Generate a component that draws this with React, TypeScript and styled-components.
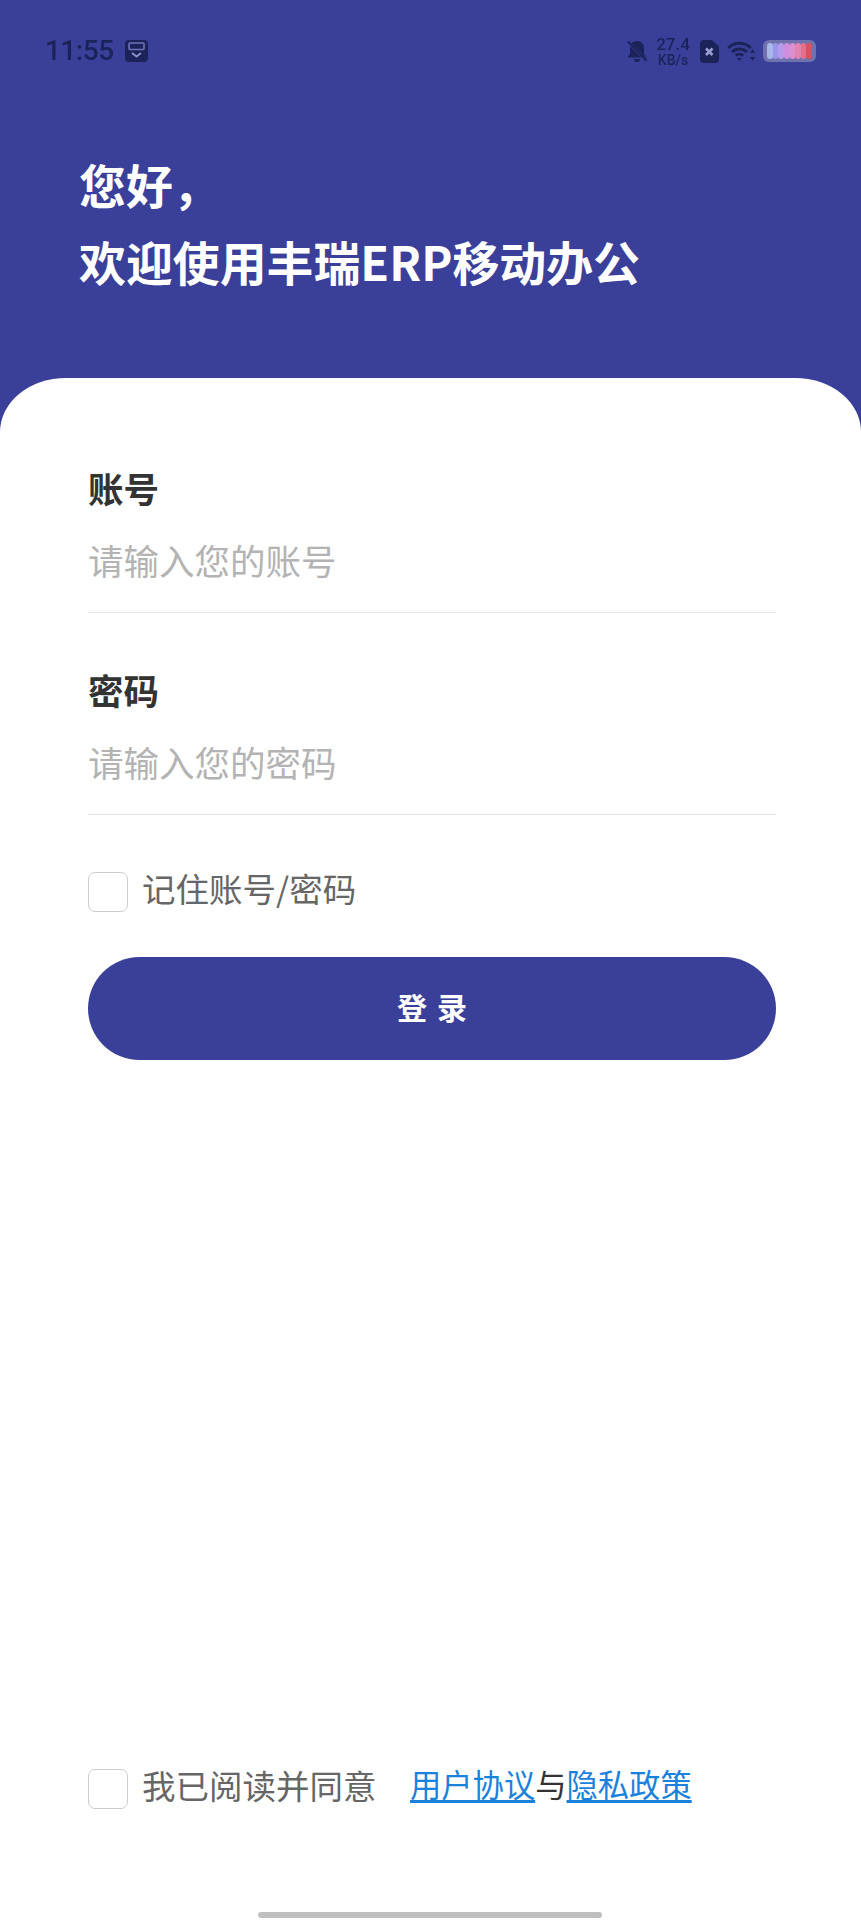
import React from "react";
import styled, { createGlobalStyle } from "styled-components";

const CJK = `"Noto Sans CJK SC", "Noto Sans", sans-serif`;
const INDIGO = "#3a4099";
const INK = "#1c2359";

const Global = createGlobalStyle`
  html, body { margin: 0; padding: 0; background: #fff; }
  * { box-sizing: border-box; }
`;
const Page = styled.div`
  width: 861px; height: 1920px; display: flex; flex-direction: column;
  background: ${INDIGO}; font-family: ${CJK}; overflow: hidden;
`;
const StatusBar = styled.div`
  height: 102px; padding: 0 45px; display: flex; align-items: center; justify-content: space-between; color: ${INK};
  filter: blur(0.4px);
`;
const StatusGroup = styled.div`display: flex; align-items: center;`;
const Clock = styled.span`
  font-family: "Roboto", sans-serif; font-size: 28px; font-weight: 500; letter-spacing: -0.5px; line-height: 32px; margin-right: 11px;
`;
const Speed = styled.div`
  display: flex; flex-direction: column; align-items: center; font-family: "Roboto", sans-serif; font-weight: 500;
  margin: 0 11px 0 10px; width: 32px;
`;
const SpeedValue = styled.span`font-size: 17px; line-height: 17px;`;
const SpeedUnit = styled.span`font-size: 14px; line-height: 14px;`;
const Battery = styled.div`
  width: 53px; height: 22px; margin-left: 7px; padding: 3px 4px; border-radius: 6px; background: #6f72ad;
  display: flex;
`;
const Cell = styled.span<{ $c: string }>`
  flex: 1; border-radius: 3px; background: ${p => p.$c};
`;
const Hero = styled.div`
  height: 276px; padding: 44px 0 0 79px; color: #fff; font-size: 46.9px; font-weight: 700; line-height: 77px;
`;
const Card = styled.div`
  flex: 1; background: #fff; border-radius: 66px 66px 0 0 / 54px 54px 0 0; padding: 0 85px 0 88px; display: flex; flex-direction: column;
`;
const Field = styled.div<{ $top: number }>`
  display: flex; flex-direction: column; border-bottom: 1px solid #e4e4e4; padding: ${p => p.$top}px 0 27px;
`;
const Label = styled.label`
  font-size: 35.5px; font-weight: 700; color: #333; line-height: 50px;
`;
const Placeholder = styled.div`
  font-size: 35.5px; color: #b3b3b3; line-height: 50px; margin-top: 22px;
`;
const CheckRow = styled.div`
  display: flex; align-items: flex-start; margin-top: 57px;
`;
const Box = styled.span`
  width: 40px; height: 40px; border: 1.5px solid #cdcdcd; border-radius: 7px; background: #fff; flex: none; margin-right: 14px;
`;
const CheckText = styled.span`
  font-size: 33.5px; color: #666; line-height: 40px; margin-top: -4px;
`;
const Submit = styled.button`
  height: 103px; margin-top: 45px; border: 0; border-radius: 52px; background: ${INDIGO}; color: #fff;
  font-family: ${CJK}; font-size: 30px; font-weight: 700; letter-spacing: 10px; padding: 0 0 6px 10px;
`;
const Agreement = styled(CheckRow)`margin-top: auto;`;
const Gap = styled.span`width: 33.500px;`;
const Link = styled.a`
  font-size: 31.3px; line-height: 40px; margin-top: -5px; color: #1a82dc; text-decoration: underline; text-underline-offset: 3px;
`;
const Joiner = styled.span`font-size: 31.3px; line-height: 40px; margin-top: -5px; color: #333;`;
const HomeBar = styled.div`
  width: 344px; height: 6px; border-radius: 3px; background: #bfbfbf; margin: 103px 0 2px 170px; flex: none;
`;

const cells = ["#a9b8e8", "#9a96ee", "#b89ae8", "#cf8fdf", "#de8fd0", "#e283b0", "#e2708a", "#d9505f"];

export default function App() {
  return (
    <Page>
      <Global />
      <StatusBar>
        <StatusGroup>
          <Clock>11:55</Clock>
          <svg width="23" height="22" viewBox="0 0 23 22">
            <rect width="23" height="22" rx="4" fill={INK} />
            <rect x="4" y="3" width="15" height="6.500" rx="1" fill="none" stroke="#6e73b8" strokeWidth="1.600" />
            <path d="M7 13l4.500 3.500L16 13" fill="none" stroke="#8a8fcb" strokeWidth="2" />
          </svg>
        </StatusGroup>
        <StatusGroup>
          <svg width="20" height="22" viewBox="0 0 20 22">
            <path fill={INK} d="M10 1c4.500 0 7 3 7 7v6l2.500 3.500H.5L3 14V8c0-4 2.500-7 7-7ZM7 19h6a3 3 0 0 1-6 0Z" />
            <path d="M0 1l20 20" stroke={INDIGO} strokeWidth="3" />
            <path d="M1 1.500l18.500 19" stroke={INK} strokeWidth="2" />
          </svg>
          <Speed>
            <SpeedValue>27.4</SpeedValue>
            <SpeedUnit>KB/s</SpeedUnit>
          </Speed>
          <svg width="19" height="23" viewBox="0 0 19 23">
            <path fill={INK} d="M4 0h8l7 6.500V19a4 4 0 0 1-4 4H4a4 4 0 0 1-4-4V4a4 4 0 0 1 4-4Z" />
            <path d="M6 8.500l6.500 6.500M12.500 8.500L6 15" stroke="#9a9ed0" strokeWidth="2.600" />
          </svg>
          <svg width="29" height="20" viewBox="0 0 28 20" style={{ marginLeft: 8 }}>
            <path d="M.8 7C7 .8 17 .8 23.200 7M4.500 11c4.200-4 10.800-4 15 0M8.200 14.500c2.200-1.800 5.400-1.800 7.600 0" fill="none" stroke={INK} strokeWidth="3" />
            <path fill={INK} d="M9.500 17h5L12 20ZM25 8.500l2.800 3.500h-5.600ZM25 19.500L22.200 16h5.600Z" />
          </svg>
          <Battery>
            {cells.map(c => <Cell key={c} $c={c} />)}
          </Battery>
        </StatusGroup>
      </StatusBar>
      <Hero>
        您好，<br />欢迎使用丰瑞ERP移动办公
      </Hero>
      <Card>
        <Field $top={85}>
          <Label>账号</Label>
          <Placeholder>请输入您的账号</Placeholder>
        </Field>
        <Field $top={52}>
          <Label>密码</Label>
          <Placeholder>请输入您的密码</Placeholder>
        </Field>
        <CheckRow>
          <Box />
          <CheckText>记住账号/密码</CheckText>
        </CheckRow>
        <Submit>登录</Submit>
        <Agreement>
          <Box />
          <CheckText>我已阅读并同意</CheckText>
          <Gap />
          <Link>用户协议</Link>
          <Joiner>与</Joiner>
          <Link>隐私政策</Link>
        </Agreement>
        <HomeBar />
      </Card>
    </Page>
  );
}
